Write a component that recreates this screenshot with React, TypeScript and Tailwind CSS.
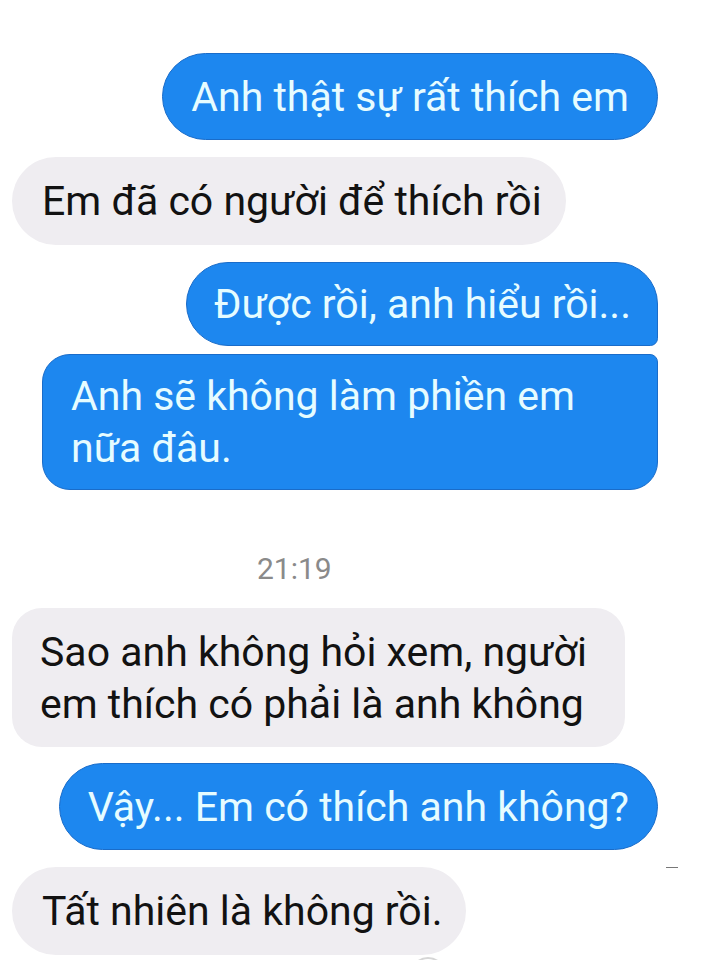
import React from "react";

const blue =
  "bg-[#1d87ef] border border-[#1a6cc9] text-[#e6fcff]";
const gray = "bg-[#efedf1] text-[#121212]";

export default function App() {
  return (
    <div
      className="w-[724px] h-[960px] overflow-hidden bg-white"
      style={{ fontFamily: "Roboto, 'Noto Sans', Arial, sans-serif" }}
    >
      <div className="flex flex-col pt-[53px] pl-[12px] pr-[66px] text-[41px] leading-[52px]">
        <div className={`self-end rounded-full px-[28px] py-[16.5px] ${blue}`}>
          Anh thật sự rất thích em
        </div>

        <div className={`self-start mt-[17px] rounded-full pl-[30px] pr-[24px] py-[18px] ${gray}`}>
          Em đã có người để thích rồi
        </div>

        <div
          className={`self-end mt-[17px] rounded-[44px] rounded-br-[8px] pl-[27px] pr-[26px] py-[15px] ${blue}`}
        >
          Được rồi, anh hiểu rồi...
        </div>

        <div
          className={`self-end mt-[8px] w-[616px] rounded-[28px] rounded-tr-[8px] px-[28px] py-[15px] ${blue}`}
        >
          Anh sẽ không làm phiền em
          <br />
          nữa đâu.
        </div>

        <div className="pt-[61px] pb-[21px] pl-[245px] text-[30px] leading-[36px] text-[#8a8a8a]">
          21:19
        </div>

        <div className={`self-start w-[613px] rounded-[30px] px-[28px] py-[17.5px] ${gray}`}>
          Sao anh không hỏi xem, người
          <br />
          em thích có phải là anh không
        </div>

        <div className={`self-end mt-[16px] rounded-full px-[28px] py-[16.5px] ${blue}`}>
          Vậy... Em có thích anh không?
        </div>

        <div className="mt-[17px] flex items-start">
          <div className={`rounded-full pl-[30px] pr-[23px] py-[18px] ${gray}`}>
            Tất nhiên là không rồi.
          </div>
          <div className="ml-auto mr-[-20px] h-[1px] w-[12px] bg-[#777]" />
        </div>

        <div className="ml-[398px] mt-[2px] h-[36px] w-[36px] rounded-full border-2 border-[#d6d6d6]" />
      </div>
    </div>
  );
}
